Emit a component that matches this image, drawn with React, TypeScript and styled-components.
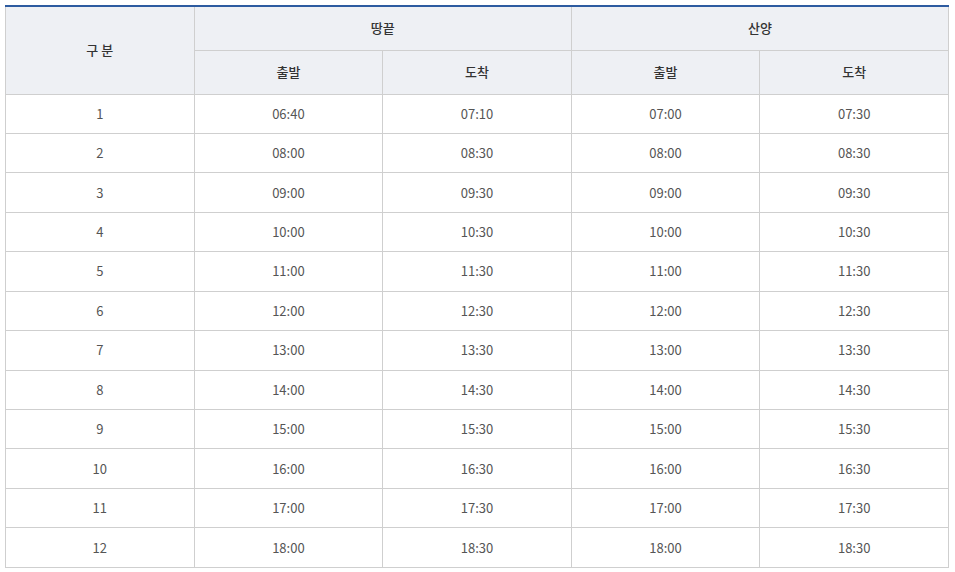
import React from "react";
import styled, { createGlobalStyle } from "styled-components";

const Global = createGlobalStyle`
  html, body { margin: 0; padding: 0; background: #fff; }
  body { font-family: "Noto Sans CJK KR", "Noto Sans", sans-serif; }
`;

const Wrap = styled.div`
  padding: 5px 0 0 5px;
`;

const Table = styled.table`
  width: 944px;
  border-collapse: collapse;
  table-layout: fixed;
  border-top: 2px solid #2d5ba0;
  font-size: 13px;
  line-height: 16px;
`;

const HeadRow = styled.tr`
  height: 44px;
`;

const BodyRow = styled.tr`
  height: 39.45px;
`;

const Th = styled.th`
  background: #eef0f4;
  border: 1px solid #cfcfcf;
  border-top: none;
  color: #333;
  font-weight: 500;
  padding: 0;
  text-align: center;
  vertical-align: middle;
`;

const Td = styled.td`
  border: 1px solid #cfcfcf;
  color: #555;
  font-weight: 400;
  padding: 0;
  text-align: center;
  vertical-align: middle;
`;

const rows: [string, string, string, string][] = [
  ["06:40", "07:10", "07:00", "07:30"],
  ["08:00", "08:30", "08:00", "08:30"],
  ["09:00", "09:30", "09:00", "09:30"],
  ["10:00", "10:30", "10:00", "10:30"],
  ["11:00", "11:30", "11:00", "11:30"],
  ["12:00", "12:30", "12:00", "12:30"],
  ["13:00", "13:30", "13:00", "13:30"],
  ["14:00", "14:30", "14:00", "14:30"],
  ["15:00", "15:30", "15:00", "15:30"],
  ["16:00", "16:30", "16:00", "16:30"],
  ["17:00", "17:30", "17:00", "17:30"],
  ["18:00", "18:30", "18:00", "18:30"],
];

export default function App() {
  return (
    <Wrap>
      <Global />
      <Table>
        <colgroup>
          <col style={{ width: "20%" }} />
          <col style={{ width: "20%" }} />
          <col style={{ width: "20%" }} />
          <col style={{ width: "20%" }} />
          <col style={{ width: "20%" }} />
        </colgroup>
        <thead>
          <HeadRow>
            <Th rowSpan={2}>구 분</Th>
            <Th colSpan={2}>땅끝</Th>
            <Th colSpan={2}>산양</Th>
          </HeadRow>
          <HeadRow>
            <Th>출발</Th>
            <Th>도착</Th>
            <Th>출발</Th>
            <Th>도착</Th>
          </HeadRow>
        </thead>
        <tbody>
          {rows.map((r, i) => (
            <BodyRow key={i}>
              <Td>{i + 1}</Td>
              {r.map((v, j) => (
                <Td key={j}>{v}</Td>
              ))}
            </BodyRow>
          ))}
        </tbody>
      </Table>
    </Wrap>
  );
}
